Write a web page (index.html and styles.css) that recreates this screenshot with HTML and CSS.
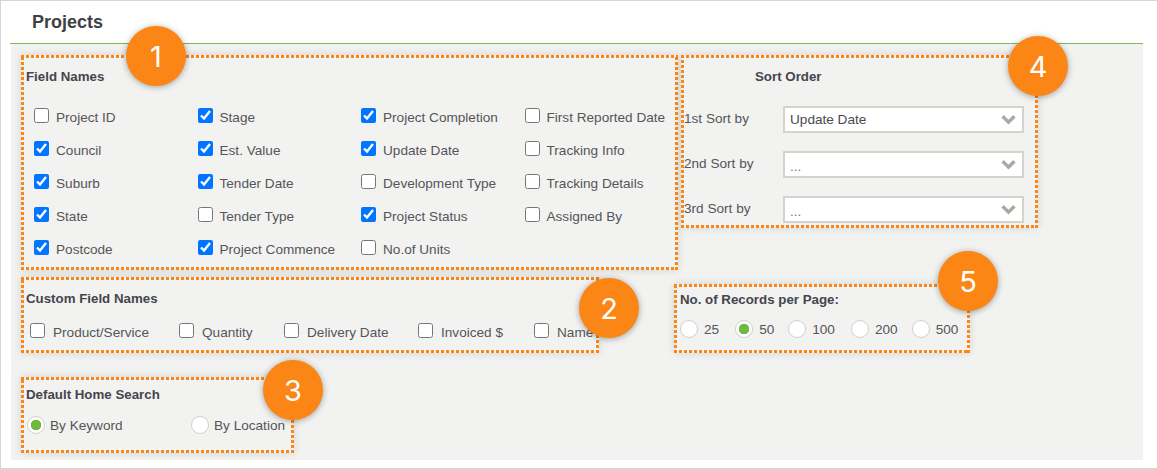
FILE: index.html
```html
<!DOCTYPE html>
<html lang="en">
<head>
<meta charset="utf-8">
<title>Projects</title>
<link rel="stylesheet" href="styles.css">
</head>
<body>
<div class="frame">
  <h1 class="page-title">Projects</h1>
  <main class="panel">
    <div class="col-left">
      <section class="box box-fields">
        <h2 class="box-title">Field Names</h2>
        <div class="field-grid">
          <label class="check"><input type="checkbox">Project ID</label>
          <label class="check"><input type="checkbox" checked>Stage</label>
          <label class="check"><input type="checkbox" checked>Project Completion</label>
          <label class="check"><input type="checkbox">First Reported Date</label>
          <label class="check"><input type="checkbox" checked>Council</label>
          <label class="check"><input type="checkbox" checked>Est. Value</label>
          <label class="check"><input type="checkbox" checked>Update Date</label>
          <label class="check"><input type="checkbox">Tracking Info</label>
          <label class="check"><input type="checkbox" checked>Suburb</label>
          <label class="check"><input type="checkbox" checked>Tender Date</label>
          <label class="check"><input type="checkbox">Development Type</label>
          <label class="check"><input type="checkbox">Tracking Details</label>
          <label class="check"><input type="checkbox" checked>State</label>
          <label class="check"><input type="checkbox">Tender Type</label>
          <label class="check"><input type="checkbox" checked>Project Status</label>
          <label class="check"><input type="checkbox">Assigned By</label>
          <label class="check"><input type="checkbox" checked>Postcode</label>
          <label class="check"><input type="checkbox" checked>Project Commence</label>
          <label class="check"><input type="checkbox">No.of Units</label>
        </div>
        <span class="badge badge-1">1</span>
      </section>
      <section class="box box-custom">
        <h2 class="box-title">Custom Field Names</h2>
        <div class="custom-row">
          <label class="check check-product"><input type="checkbox">Product/Service</label>
          <label class="check check-quantity"><input type="checkbox">Quantity</label>
          <label class="check check-delivery"><input type="checkbox">Delivery Date</label>
          <label class="check check-invoiced"><input type="checkbox">Invoiced $</label>
          <label class="check"><input type="checkbox">Name</label>
        </div>
        <span class="badge badge-2">2</span>
      </section>
      <section class="box box-home">
        <h2 class="box-title">Default Home Search</h2>
        <div class="home-row">
          <label class="radio radio-keyword"><input type="radio" name="home" checked>By Keyword</label>
          <label class="radio"><input type="radio" name="home">By Location</label>
        </div>
        <span class="badge badge-3">3</span>
      </section>
    </div>
    <div class="col-right">
      <section class="box box-sort">
        <h2 class="box-title sort-title">Sort Order</h2>
        <div class="sort-row">
          <span class="sort-label">1st Sort by</span>
          <div class="select"><span>Update Date</span><svg class="chevron" viewBox="0 0 14 10"><path d="M1.500 2 7 7.500 12.500 2"/></svg></div>
        </div>
        <div class="sort-row">
          <span class="sort-label">2nd Sort by</span>
          <div class="select select-empty"><span>...</span><svg class="chevron" viewBox="0 0 14 10"><path d="M1.500 2 7 7.500 12.500 2"/></svg></div>
        </div>
        <div class="sort-row">
          <span class="sort-label">3rd Sort by</span>
          <div class="select select-empty"><span>...</span><svg class="chevron" viewBox="0 0 14 10"><path d="M1.500 2 7 7.500 12.500 2"/></svg></div>
        </div>
        <span class="badge badge-4">4</span>
      </section>
      <section class="box box-records">
        <h2 class="box-title">No. of Records per Page:</h2>
        <div class="records-row">
          <label class="radio"><input type="radio" name="rec">25</label>
          <label class="radio"><input type="radio" name="rec" checked>50</label>
          <label class="radio"><input type="radio" name="rec">100</label>
          <label class="radio"><input type="radio" name="rec">200</label>
          <label class="radio"><input type="radio" name="rec">500</label>
        </div>
        <span class="badge badge-5">5</span>
      </section>
    </div>
  </main>
</div>
</body>
</html>
```
FILE: styles.css
```css
* { box-sizing: border-box; }
html, body { margin: 0; padding: 0; background: #fff; }
body {
  width: 1157px;
  height: 470px;
  overflow: hidden;
  font-family: "Liberation Sans", Arial, sans-serif;
  font-size: 13.600px;
  color: #55555a;
}
.frame {
  width: 1157px;
  height: 470px;
  border-top: 1px solid #d6d6d6;
  border-left: 1px solid #d6d6d6;
  border-bottom: 2px solid #d6d6d6;
  padding: 0 14px 0 9px;
  background: #fff;
}
.page-title {
  margin: 0;
  height: 43px;
  border-bottom: 1px solid #7cb95a;
  padding: 11px 0 0 22px;
  font-size: 18px;
  line-height: 20px;
  font-weight: 700;
  color: #3f3f46;
}
.panel {
  display: flex;
  margin-left: 1px;
  height: 416px;
  background: #f2f2f0;
  padding: 11px 0 0 10px;
}
.col-left { width: 658px; flex: none; display: flex; flex-direction: column; align-items: flex-start; }
.col-right { margin-left: 2px; display: flex; flex-direction: column; align-items: flex-start; }
.box {
  position: relative;
  flex: none;
  box-shadow: 0 0 8px rgba(0, 0, 0, .13);
  background-color: #f2f2f0;
  background-image:
    repeating-linear-gradient(90deg, #fb8616 0 3px, transparent 3px 5px),
    repeating-linear-gradient(90deg, #fb8616 0 3px, transparent 3px 5px),
    repeating-linear-gradient(0deg, #fb8616 0 3px, transparent 3px 5px),
    repeating-linear-gradient(0deg, #fb8616 0 3px, transparent 3px 5px);
  background-size: 100% 3px, 100% 3px, 3px 100%, 3px 100%;
  background-position: 0 0, 0 100%, 0 0, 100% 0;
  background-repeat: no-repeat;
}
.box-title {
  margin: 0;
  font-size: 13.300px;
  line-height: 16px;
  font-weight: 700;
  color: #45454d;
}
.box-fields { width: 657px; height: 215px; padding: 14px 0 0 5px; }
.field-grid {
  display: grid;
  grid-template-columns: repeat(4, 163.500px);
  grid-auto-rows: 33px;
  margin: 15px 0 0 8px;
}
.box-custom { width: 578px; height: 76px; margin-top: 7px; padding: 14px 0 0 5px; }
.custom-row { display: flex; margin: 8px 0 0 4px; height: 33px; }
.custom-row .check input { margin-right: 8px; }
.check-product { width: 149px; }
.check-quantity { width: 105px; }
.check-delivery { width: 134px; }
.check-invoiced { width: 116px; }
.box-home { width: 273px; height: 76px; margin-top: 24px; padding: 10px 0 0 5px; }
.home-row { display: flex; margin: 7px 0 0 1px; }
.radio-keyword { width: 164px; }
.check { display: flex; align-items: center; white-space: nowrap; height: 33px; padding-top: 2px; }
.check input {
  width: 15px;
  height: 15px;
  margin: -5px 7px 0 0;
  flex: none;
  accent-color: #0075ff;
}
.radio { display: flex; align-items: center; white-space: nowrap; height: 30px; }
.radio input {
  appearance: none;
  -webkit-appearance: none;
  width: 18px;
  height: 18px;
  margin: 0 5px 0 0;
  flex: none;
  border-radius: 50%;
  border: 1px solid #d0d0cc;
  background: #fff;
}
.radio input:checked {
  background: radial-gradient(circle, #6fbb3f 0 5px, #fff 5.500px);
}
.box-sort { width: 357px; height: 173px; padding: 14px 0 0 3px; }
.sort-title { margin: 0 0 0 71px; }
.sort-row { display: flex; align-items: center; height: 27px; margin-bottom: 18px; }
.sort-row:nth-of-type(1) { margin-top: 21px; }
.sort-label { width: 99px; flex: none; margin-top: -3px; }
.select {
  width: 241px;
  height: 27px;
  display: flex;
  align-items: center;
  justify-content: space-between;
  padding: 0 6px 0 5px;
  border: 2px solid #d4d4ce;
  background: #fff;
  color: #4a4a52;
}
.select-empty { color: #777; }
.select-empty span { padding-top: 3px; }
.chevron { width: 15px; height: 11px; fill: none; stroke: #a9a9a6; stroke-width: 3.200; }
.box-records { width: 296px; height: 69px; margin: 56px 0 0 -7px; padding: 8px 0 0 6px; }
.records-row { display: flex; margin: 6px 0 0 0; }
.records-row .radio input { margin-right: 6px; }
.records-row .radio:nth-child(odd) { margin-right: 16px; }
.records-row .radio:nth-child(even) { margin-right: 14px; }
.badge {
  position: absolute;
  width: 60px;
  height: 60px;
  display: flex;
  align-items: center;
  justify-content: center;
  border-radius: 50%;
  background: #fb8616;
  box-shadow: 0 1px 6px rgba(0, 0, 0, .35);
  color: #fff;
  font-family: Inter, sans-serif;
  font-size: 29px;
}
.badge-1 { left: 105px; top: -29px; }
.badge-2 { left: 558px; top: 1px; }
.badge-3 { left: 242px; top: -17px; }
.badge-4 { left: 327px; top: -19px; }
.badge-5 { left: 264px; top: -33px; }
```
